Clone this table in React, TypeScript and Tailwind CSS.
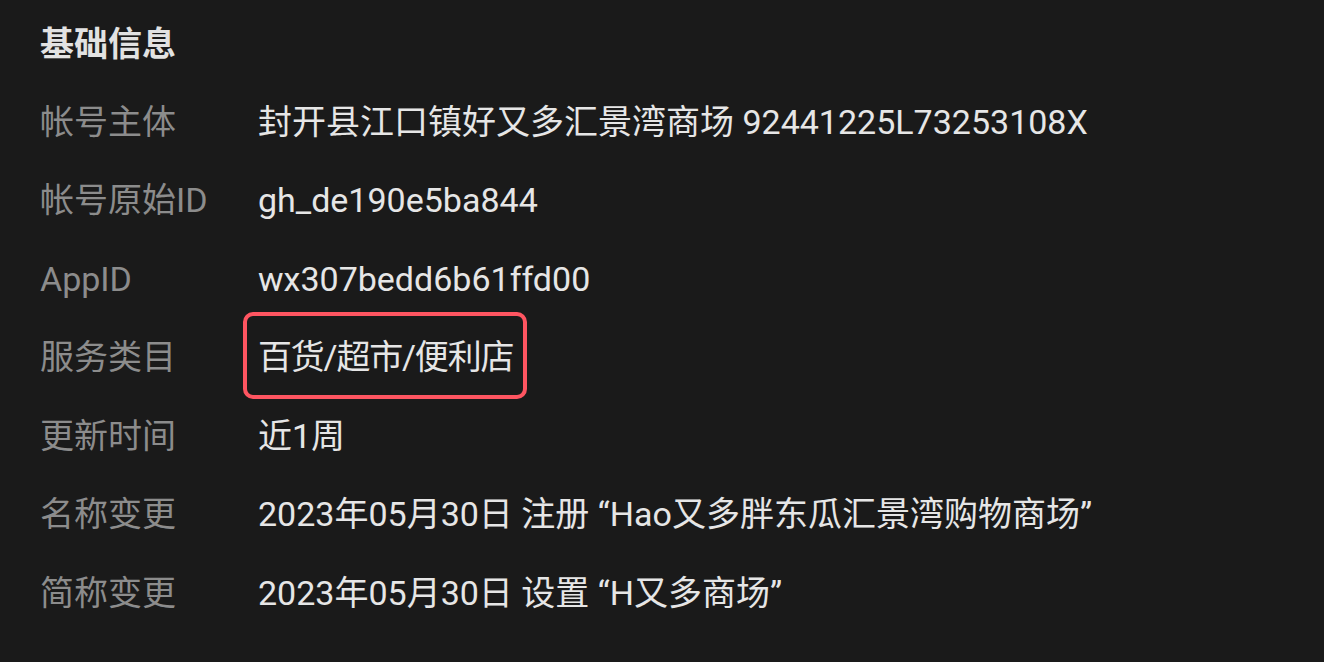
const rows: { label: string; value: string; highlight?: boolean }[] = [
  { label: "帐号主体", value: "封开县江口镇好又多汇景湾商场 92441225L73253108X" },
  { label: "帐号原始ID", value: "gh_de190e5ba844" },
  { label: "AppID", value: "wx307bedd6b61ffd00" },
  { label: "服务类目", value: "百货/超市/便利店", highlight: true },
  { label: "更新时间", value: "近1周" },
  { label: "名称变更", value: "2023年05月30日 注册 “Hao又多胖东瓜汇景湾购物商场”" },
  { label: "简称变更", value: "2023年05月30日 设置 “H又多商场”" },
];

export default function App() {
  return (
    <div
      className="h-[662px] w-[1324px] overflow-hidden bg-[#1a1a1a] pl-[40px] pt-[5px] text-[34px]"
      style={{ fontFamily: 'Roboto, "Noto Sans CJK SC", sans-serif' }}
    >
      <h2 className="flex h-[78px] items-center font-bold text-[#e2e2e2]">基础信息</h2>

      {rows.map((row) => (
        <div key={row.label} className="flex h-[78.5px] items-center">
          <div className="w-[218px] shrink-0 text-[#8c8c8c]">{row.label}</div>
          <div className="flex h-full items-center whitespace-nowrap text-[#e6e6e6]">
            {row.highlight ? (
              <span className="relative inline-flex h-full items-center tracking-[-1.2px]">
                {row.value}
                <span className="pointer-events-none absolute -top-[7px] -bottom-[2px] -left-[15px] -right-[14px] rounded-[10px] border-[4px] border-[#ff5561]" />
              </span>
            ) : (
              row.value
            )}
          </div>
        </div>
      ))}
    </div>
  );
}
